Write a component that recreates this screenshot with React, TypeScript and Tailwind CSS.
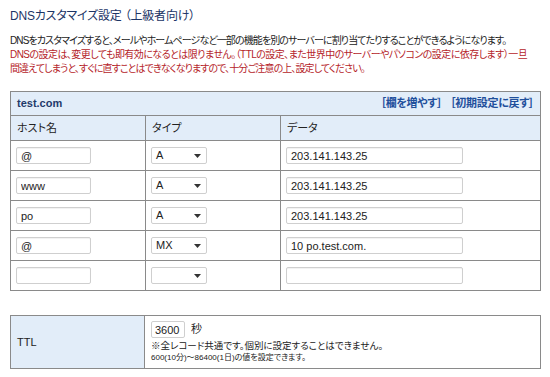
import React from 'react';

const jp = "font-['Liberation_Sans','Noto_Sans_CJK_JP',sans-serif] [font-feature-settings:'palt']";

type DnsRecord = {
  host: string;
  type: string;
  data: string;
};

const records: DnsRecord[] = [
  { host: '@', type: 'A', data: '203.141.143.25' },
  { host: 'www', type: 'A', data: '203.141.143.25' },
  { host: 'po', type: 'A', data: '203.141.143.25' },
  { host: '@', type: 'MX', data: '10 po.test.com.' },
  { host: '', type: '', data: '' },
];

function TextBox({ value, className }: { value: string; className: string }) {
  return (
    <input
      readOnly
      defaultValue={value}
      className={`h-[17px] rounded-[2px] border border-[#cfcfcf] bg-white px-[4px] text-[11px] text-[#222] shadow-[inset_0_1px_1px_rgba(0,0,0,0.06)] outline-none ${className}`}
    />
  );
}

function SelectBox({ value }: { value: string }) {
  return (
    <div className="flex h-[17px] w-[56px] items-center justify-between rounded-[2px] border border-[#cfcfcf] bg-white pl-[4px] pr-[5px] text-[11px] text-[#222]">
      <span>{value}</span>
      <svg width="7" height="4" viewBox="0 0 7 4">
        <path d="M0 0h7L3.5 4z" fill="#333" />
      </svg>
    </div>
  );
}

export default function App() {
  return (
    <div className={`h-[377px] w-[550px] overflow-hidden bg-white pl-[10px] pt-[8px] text-[#222] ${jp}`}>
      <h1 className="text-[12px] leading-[16px] tracking-[-0.2px] text-[#1c3566]">
        DNSカスタマイズ設定 （上級者向け）
      </h1>

      <div className="mt-[10px] text-[10px] leading-[14px] tracking-[-0.9px]">
        <p>
          DNSをカスタマイズすると、メールやホームページなど一部の機能を別のサーバーに割り当てたりすることができるようになります。
        </p>
        <p className="text-[#b5242a]">
          <span className="tracking-[-0.55px]">
            DNSの設定は、変更しても即有効になるとは限りません。（TTLの設定、また世界中のサーバーやパソコンの設定に依存します）一旦
          </span>
          <br />
          間違えてしまうと、すぐに直すことはできなくなりますので、十分ご注意の上、設定してください。
        </p>
      </div>

      <table className="mt-[15px] w-[531px] table-fixed border-collapse border border-[#8a8a8a] text-[11px]">
        <colgroup>
          <col className="w-[135px]" />
          <col className="w-[135px]" />
          <col />
        </colgroup>
        <thead>
          <tr className="h-[24px] bg-[#e2edf9]">
            <th colSpan={3} className="px-[6px] text-left font-normal">
              <div className="flex items-center justify-between">
                <span className="font-bold text-[#1f3a6b]">test.com</span>
                <span className="flex gap-[8px] font-bold tracking-[-0.3px] text-[#1f4f9c]">
                  <span>［欄を増やす］</span>
                  <span>［初期設定に戻す］</span>
                </span>
              </div>
            </th>
          </tr>
          <tr className="h-[25px] bg-[#e2edf9] text-left">
            <th className="border border-[#8a8a8a] px-[6px] font-normal">ホスト名</th>
            <th className="border border-[#8a8a8a] px-[6px] font-normal">タイプ</th>
            <th className="border border-[#8a8a8a] px-[6px] font-normal">データ</th>
          </tr>
        </thead>
        <tbody>
          {records.map((record, i) => (
            <tr key={i} className="h-[30px]">
              <td className="border border-[#8a8a8a] px-[5px]">
                <TextBox value={record.host} className="w-[75px]" />
              </td>
              <td className="border border-[#8a8a8a] px-[5px]">
                <SelectBox value={record.type} />
              </td>
              <td className="border border-[#8a8a8a] px-[5px]">
                <TextBox value={record.data} className="w-[177px]" />
              </td>
            </tr>
          ))}
        </tbody>
      </table>

      <table className="mt-[24px] w-[531px] table-fixed border-collapse border border-[#8a8a8a] text-[11px]">
        <colgroup>
          <col className="w-[134px]" />
          <col />
        </colgroup>
        <tbody>
          <tr className="h-[53px]">
            <th className="border border-[#8a8a8a] bg-[#e2edf9] px-[6px] text-left font-normal">TTL</th>
            <td className="border border-[#8a8a8a] px-[6px]">
              <div className="flex items-center gap-[6px]">
                <input
                  readOnly
                  defaultValue="3600"
                  className="h-[17px] w-[34px] rounded-[2px] border border-[#cfcfcf] bg-white px-[3px] text-[11px] text-[#222] outline-none"
                />
                <span>秒</span>
              </div>
              <div className="mt-[2px] text-[9.5px] leading-[12px]">
                ※全レコード共通です。個別に設定することはできません。
              </div>
              <div className="text-[8px] leading-[11px]">
                600(10分)～86400(1日)の値を設定できます。
              </div>
            </td>
          </tr>
        </tbody>
      </table>
    </div>
  );
}
